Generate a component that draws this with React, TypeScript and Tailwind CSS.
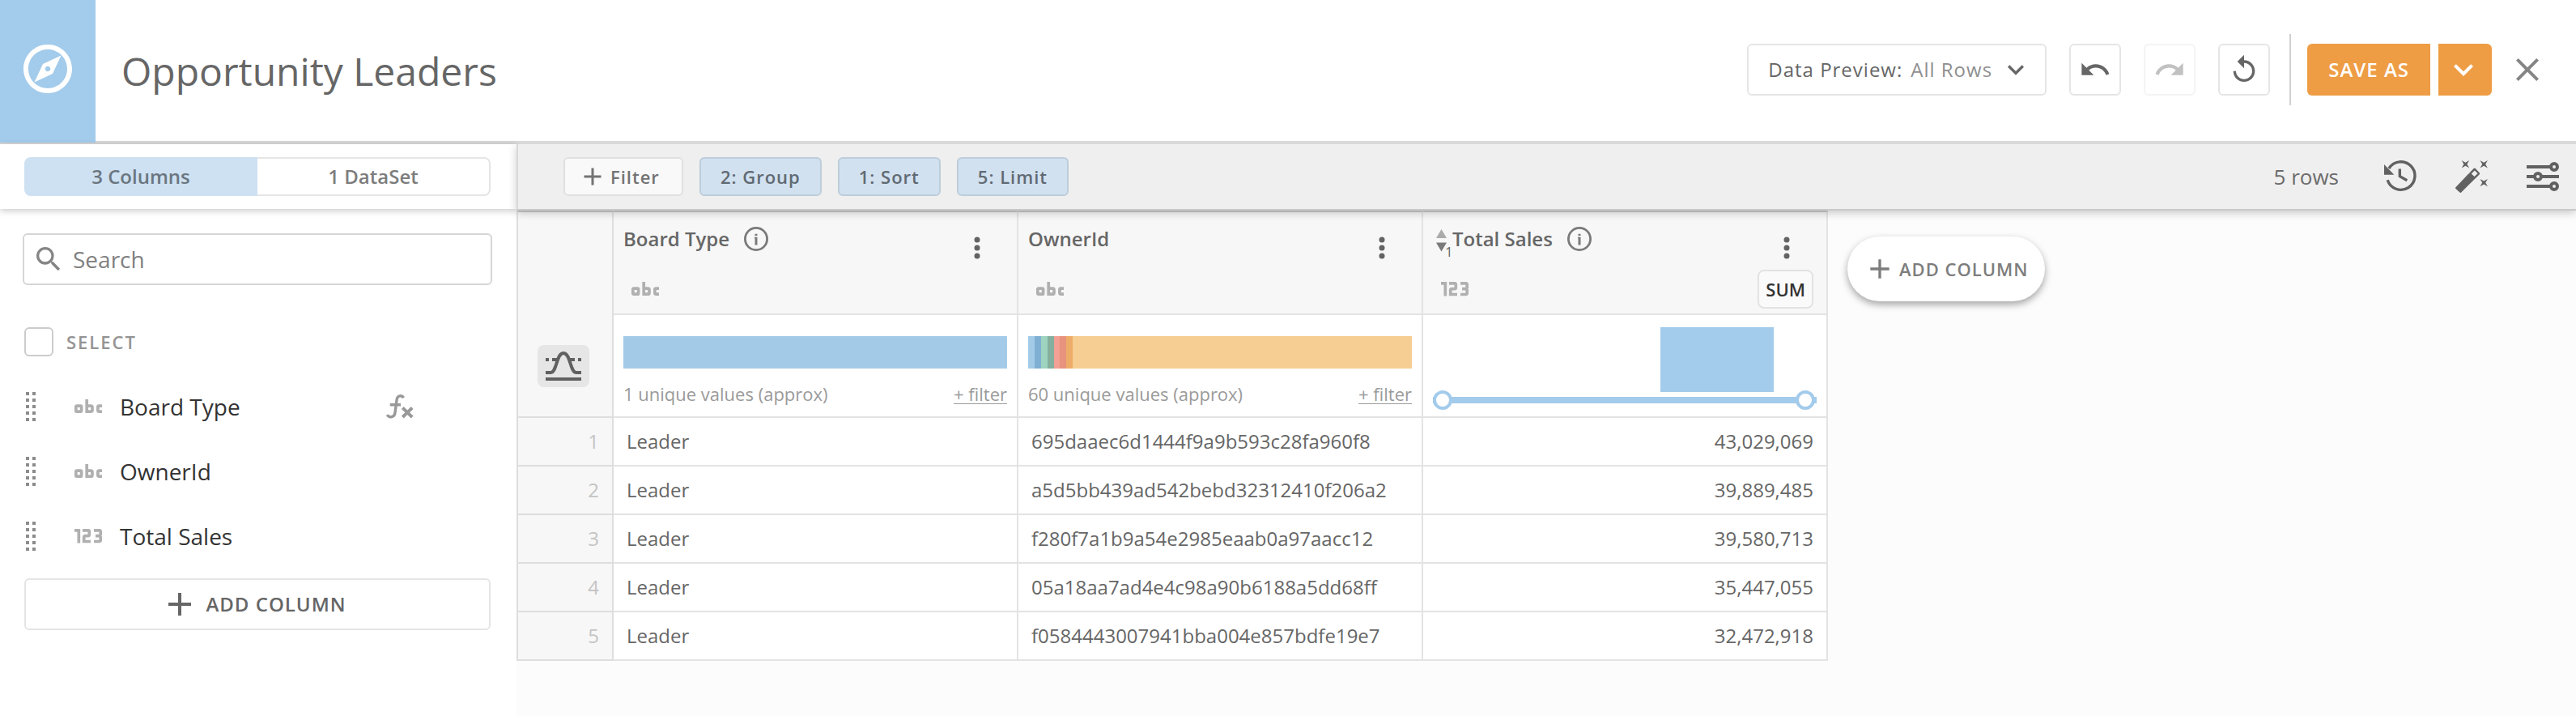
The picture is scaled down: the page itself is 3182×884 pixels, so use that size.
import React, { useState } from "react";
import {
  MdAdd,
  MdClose,
  MdKeyboardArrowDown,
  MdOutlineExplore,
  MdRedo,
  MdReplay,
  MdSearch,
  MdUndo,
} from "react-icons/md";

type ColumnKind = "text" | "number";

function TextTypeIcon() {
  return (
    <svg width="34" height="18" viewBox="0 0 34 18" fill="none" stroke="currentColor" strokeWidth="3.7" role="img" aria-label="Text column">
      <rect x="1.8" y="8.2" width="6.8" height="7" rx="1" />
      <path d="M15.2 0V15.2H20.2Q22 15.2 22 13.4V10Q22 8.2 20.2 8.2H15.2" />
      <path d="M34 8.2H30.4Q28.9 8.2 28.9 9.8V13.6Q28.9 15.2 30.4 15.2H34" />
    </svg>
  );
}

function NumberTypeIcon() {
  return (
    <svg width="34" height="18" viewBox="0 0 34 18" fill="none" stroke="currentColor" strokeWidth="3.7" role="img" aria-label="Number column">
      <path d="M0 1.8H5.3V17.5" />
      <path d="M10 1.8H16.6Q18.3 1.8 18.3 3.4V6.9Q18.3 8.6 16.6 8.6H13.4Q11.7 8.6 11.7 10.3V15.5H20" />
      <path d="M24 1.8H30.6Q32.2 1.8 32.2 3.4V7L30.8 8.6L32.2 10.2V13.8Q32.2 15.5 30.6 15.5H24M26 8.6H31" />
    </svg>
  );
}

function TypeIcon({ kind }: { kind: ColumnKind }) {
  return kind === "text" ? <TextTypeIcon /> : <NumberTypeIcon />;
}

function FormulaIcon() {
  return (
    <svg width="34" height="30" viewBox="0 0 34 30" fill="none" stroke="currentColor" strokeWidth="3.4" role="img" aria-label="Formula">
      <path d="M21.5 4.2C19.5 .8 14 .8 13.2 6L11 22.5C10.3 28.6 4 29.2 1.2 25.2M4.7 12.7H18" />
      <path d="M20.3 16.5L32.2 28M32.2 16.5L20.3 28" strokeWidth="4" />
    </svg>
  );
}

function DragHandle() {
  return (
    <svg width="12" height="36" viewBox="0 0 12 36" fill="currentColor" aria-hidden="true">
      {[0, 8, 16, 24, 32].map((y) => (
        <path key={y} d={`M0 ${y}h4v4h-4zM8 ${y}h4v4h-4z`} />
      ))}
    </svg>
  );
}

function InfoIcon() {
  return (
    <svg width="30" height="30" viewBox="0 0 30 30" fill="none" stroke="currentColor" aria-hidden="true">
      <circle cx="15" cy="15" r="13.6" strokeWidth="2.8" />
      <path d="M15 8.8V11M15 12.8V22.6" strokeWidth="3" />
      <path d="M13 13.5h2" strokeWidth="1.4" />
    </svg>
  );
}

function DotsIcon() {
  return (
    <svg width="8" height="28" viewBox="0 0 8 28" fill="currentColor" aria-hidden="true">
      <circle cx="4" cy="4" r="3.5" />
      <circle cx="4" cy="14" r="3.5" />
      <circle cx="4" cy="24" r="3.5" />
    </svg>
  );
}

function HistoryIcon() {
  return (
    <svg width="40" height="40" viewBox="0 0 40 40" fill="none" stroke="currentColor" strokeWidth="3.4" aria-hidden="true">
      <path d="M0 5V17.7H12.3Z" fill="currentColor" stroke="none" />
      <path d="M5.9 10A17.3 17.3 0 1 1 4.2 24.3M19.3 10.5V19.6L28.3 24.8" />
    </svg>
  );
}

function WandIcon() {
  const star = "-4.7 -4.7l4.7 2.7l4.7 -2.7l-2.7 4.7l2.7 4.7l-4.7 -2.7l-4.7 2.7l2.7 -4.7z";
  return (
    <svg width="40" height="40" viewBox="0 0 40 40" fill="currentColor" aria-hidden="true">
      <path
        fillRule="evenodd"
        d="M22.6 10Q23.7 9 24.8 10L29.7 15.2Q30.6 16.3 29.6 17.4L7 39.7Q6.2 40.2 5.4 39.5L.4 35Q-.4 34.1 .4 33.2ZM23.8 12.6L19.8 16.4L23.4 20L27.6 16.2Z"
      />
      <path d={`M12.4 4.7m${star}M35.2 4.7m${star}M35.2 27.6m${star}`} />
    </svg>
  );
}

function TuneIcon() {
  return (
    <svg width="40" height="36" viewBox="0 0 40 36" fill="none" stroke="currentColor" strokeWidth="4" aria-hidden="true">
      <path d="M0 6H30M0 18H10M18 18H40M0 30H30" />
      <circle cx="34" cy="6" r="4" />
      <circle cx="14" cy="18" r="4" />
      <circle cx="34" cy="30" r="4" />
    </svg>
  );
}

function DistributionIcon() {
  return (
    <svg width="44" height="36" viewBox="0 0 44 36" fill="none" stroke="currentColor" strokeWidth="4" aria-hidden="true">
      <path d="M0 26H6C14 26 13 2 22 2S30 26 38 26H44M0 34H44" />
      <path d="M0 10H4M8 10H15M29 10H36M40 10H44" />
    </svg>
  );
}

function SortArrows() {
  return (
    <span className="relative block h-8 w-6 shrink-0">
      <svg className="absolute top-1 left-1" width="13" height="28" viewBox="0 0 13 28" role="img" aria-label="Sorted descending">
        <path d="M6.5 0L13 11H0Z" fill="#ababab" />
        <path d="M6.5 27.5L13 16.5H0Z" fill="#7a7a7a" />
      </svg>
      <span className="absolute top-[22px] left-[15px] text-[17px] leading-5 font-normal">1</span>
    </span>
  );
}

interface HeaderCellProps {
  name: string;
  kind: ColumnKind;
  info?: boolean;
  sorted?: boolean;
  aggregate?: string;
}

function HeaderCell({ name, kind, info, sorted, aggregate }: HeaderCellProps) {
  return (
    <th scope="col" className="border-t-2 border-r-2 border-b-2 border-[#e3e3e3] border-t-[#c9c9c9] bg-[#f7f7f7] p-0 text-left align-top font-semibold">
      <div className="mt-[17px] flex h-[54px] items-start justify-between pl-3">
        <div className="flex h-8 items-center">
          {sorted && <SortArrows />}
          <span>{name}</span>
          {info && (
            <button type="button" aria-label={`About ${name}`} className="ml-[18px] text-[#7a7a7a]">
              <InfoIcon />
            </button>
          )}
        </div>
        <button type="button" aria-label={`${name} options`} className="mr-[33px] flex h-[54px] w-8 items-center justify-center text-[#636363]">
          <DotsIcon />
        </button>
      </div>
      <div className="mb-1.5 flex h-12 items-center justify-between pr-4 pl-[22px] text-[#b0b0b0]">
        <TypeIcon kind={kind} />
        {aggregate && (
          <button type="button" className="h-12 rounded-lg border-2 border-[#e3e3e3] bg-[#fafafa] px-2 text-[22px] font-semibold text-[#333]">
            {aggregate}
          </button>
        )}
      </div>
    </th>
  );
}

function ValuesCell({ label, segments }: { label: string; segments: React.ReactNode }) {
  return (
    <td className="border-r-2 border-b-2 border-[#e3e3e3] bg-white p-0 align-top">
      <div className="px-3 pt-[26px] pb-3">
        <div className="flex h-10">{segments}</div>
        <div className="mt-[15px] flex items-center justify-between text-[22px] leading-8 text-[#9a9a9a]">
          <span>{label}</span>
          <a href="#filter" className="border-b border-[#9a9a9a] leading-6">
            + filter
          </a>
        </div>
      </div>
    </td>
  );
}

const thumb =
  "pointer-events-none absolute top-0 left-0 h-6 w-[calc(100%-2px)] appearance-none bg-transparent [&::-webkit-slider-thumb]:pointer-events-auto [&::-webkit-slider-thumb]:size-6 [&::-webkit-slider-thumb]:appearance-none [&::-webkit-slider-thumb]:rounded-full [&::-webkit-slider-thumb]:border-4 [&::-webkit-slider-thumb]:border-[#a3cbeb] [&::-webkit-slider-thumb]:bg-white";

function HistogramCell() {
  const [range, setRange] = useState([0, 100]);
  return (
    <td className="border-r-2 border-b-2 border-[#e3e3e3] bg-white p-0 align-top">
      <div className="px-3 pt-[15px] pb-2">
        <div className="flex h-20 justify-end pr-[53px]">
          <div className="w-[140px] bg-[#a3cbeb]" />
        </div>
        <div className="relative -mt-0.5 flex h-6 items-center">
          <div className="h-2 w-full bg-[#a3cbeb]" />
          <input type="range" aria-label="Minimum" value={range[0]} onChange={(e) => setRange([+e.target.value, range[1]])} className={thumb} />
          <input type="range" aria-label="Maximum" value={range[1]} onChange={(e) => setRange([range[0], +e.target.value])} className={thumb} />
        </div>
      </div>
    </td>
  );
}

const fields: { name: string; kind: ColumnKind; formula?: boolean }[] = [
  { name: "Board Type", kind: "text", formula: true },
  { name: "OwnerId", kind: "text" },
  { name: "Total Sales", kind: "number" },
];

const rows = [
  ["Leader", "695daaec6d1444f9a9b593c28fa960f8", "43,029,069"],
  ["Leader", "a5d5bb439ad542bebd32312410f206a2", "39,889,485"],
  ["Leader", "f280f7a1b9a54e2985eaab0a97aacc12", "39,580,713"],
  ["Leader", "05a18aa7ad4e4c98a90b6188a5dd68ff", "35,447,055"],
  ["Leader", "f0584443007941bba004e857bdfe19e7", "32,472,918"],
];

const steps = ["2: Group", "1: Sort", "5: Limit"];

const squareButton = "flex size-16 items-center justify-center rounded-md border-2 border-[#e5e5e5] text-[#666]";

function Header() {
  return (
    <header className="flex h-[178px] border-b-4 border-[#d9d9d9] bg-white">
      <div className="-mb-0.5 flex w-[118px] shrink-0 items-center justify-center bg-[#a3cbeb] pb-1.5 text-white">
        <MdOutlineExplore size={72} />
      </div>
      <div className="flex flex-1 items-center justify-between pr-[46px] pb-0.5 pl-8">
        <h1 className="pt-1 text-[48px] leading-none text-[#666]">Opportunity Leaders</h1>
        <div className="flex items-center">
          <div className="relative flex h-16 items-center rounded-md border-2 border-[#e5e5e5] pr-5 pl-6 text-[24px] tracking-[1px] text-[#666]">
            <label htmlFor="preview">Data Preview:</label>
            <select id="preview" className="ml-2.5 w-[146px] appearance-none bg-transparent text-[#8f8f8f]">
              <option>All Rows</option>
            </select>
            <MdKeyboardArrowDown size={40} className="pointer-events-none absolute right-4" />
          </div>
          <button type="button" aria-label="Undo" className={`ml-7 ${squareButton}`}>
            <MdUndo size={40} className="shrink-0" />
          </button>
          <button type="button" aria-label="Redo" disabled className={`ml-7 opacity-40 ${squareButton}`}>
            <MdRedo size={40} className="shrink-0" />
          </button>
          <button type="button" aria-label="Reset" className={`ml-7 ${squareButton}`}>
            <MdReplay size={40} className="shrink-0" />
          </button>
          <div className="mr-5 ml-6 h-[88px] w-0.5 bg-[#d0d0d0]" />
          <button type="button" className="h-16 rounded-l-md bg-[#ee9d45] px-[26px] text-[24px] font-semibold tracking-[1px] text-white">
            SAVE AS
          </button>
          <button type="button" aria-label="More save options" className="ml-2.5 flex h-16 w-[66px] items-center justify-center rounded-r-md bg-[#ee9d45] pr-1 text-white">
            <MdKeyboardArrowDown size={48} />
          </button>
          <button type="button" aria-label="Close" className="-mr-2.5 ml-5 text-[#858585]">
            <MdClose size={48} />
          </button>
        </div>
      </div>
    </header>
  );
}

function Sidebar() {
  return (
    <aside className="w-[638px] shrink-0 bg-white">
      <div className="flex h-20 items-center bg-white pr-8 pl-[30px] text-[24px] font-semibold shadow-[0_2px_8px_rgba(0,0,0,0.22)]">
        <button type="button" className="h-12 w-1/2 rounded-l-lg bg-[#cee1f2] text-[#6a7680]">
          3 Columns
        </button>
        <button type="button" className="h-12 w-1/2 rounded-r-lg border-2 border-l-0 border-[#e5e5e5] text-[#7d7d7d]">
          1 DataSet
        </button>
      </div>
      <div className="pt-[30px] pr-8 pl-[30px]">
        <div className="-mx-0.5 flex h-16 items-center rounded-md border-2 border-[#d6d6d6] pl-2.5 text-[#858585]">
          <MdSearch size={40} />
          <input type="search" aria-label="Search" placeholder="Search" className="ml-2.5 min-w-0 flex-1 bg-transparent text-[28px] outline-none placeholder:text-[#808080]" />
        </div>
        <label className="mt-[52px] flex h-9 items-center gap-4 text-[22px] font-semibold tracking-[2px] text-[#949494]">
          <input type="checkbox" className="size-9 appearance-none rounded-md border-2 border-[#ccc] bg-white checked:bg-[#a3cbeb]" />
          SELECT
        </label>
        <ul className="mt-[22px]">
          {fields.map((field) => (
            <li key={field.name} className="flex h-20 items-center pr-[95px] pl-0.5 text-[28px] text-[#333]">
              <span className="text-[#8c8c8c]">
                <DragHandle />
              </span>
              <span className="ml-12 text-[#b0b0b0]">
                <TypeIcon kind={field.kind} />
              </span>
              <span className="ml-[22px] flex-1">{field.name}</span>
              {field.formula && (
                <span className="text-[#999]">
                  <FormulaIcon />
                </span>
              )}
            </li>
          ))}
        </ul>
        <button type="button" className="mt-3 flex h-16 w-full items-center justify-center gap-2 rounded-md border-2 border-[#e5e5e5] pr-2.5 text-[24px] font-semibold tracking-[1px] text-[#666]">
          <MdAdd size={48} />
          ADD COLUMN
        </button>
      </div>
    </aside>
  );
}

function Toolbar() {
  return (
    <div className="relative z-10 flex h-[82px] items-center justify-between border-b-2 border-l-2 border-[#c9c9c9] border-l-[#d9d9d9] bg-[#efefef] pr-[21px] pl-14 shadow-[0_3px_10px_rgba(0,0,0,0.2)] [clip-path:inset(0_0_-16px_-16px)]">
      <div className="flex gap-5 text-[22px] font-semibold tracking-[1px]">
        <button type="button" className="flex h-12 items-center gap-1 rounded-md border-2 border-[#e0e0e0] bg-[#f9f9f9] pr-[27px] pl-4 text-[#737373]">
          <MdAdd size={36} />
          Filter
        </button>
        {steps.map((step) => (
          <button key={step} type="button" className="h-12 rounded-md border-2 border-[#bccddc] bg-[#d2e1f0] px-6 text-[#606a73]">
            {step}
          </button>
        ))}
      </div>
      <div className="flex items-center text-[#616161]">
        <span className="mr-14 text-[26px] text-[#6b6b6b]">5 rows</span>
        <button type="button" aria-label="History" className="mr-12">
          <HistoryIcon />
        </button>
        <button type="button" aria-label="Suggestions" className="mr-12">
          <WandIcon />
        </button>
        <button type="button" aria-label="Settings">
          <TuneIcon />
        </button>
      </div>
    </div>
  );
}

function DataTable() {
  return (
    <table className="w-[1620px] shrink-0 table-fixed border-separate border-spacing-0 text-[24px] text-[#666]">
      <colgroup>
        <col className="w-[120px]" />
        <col className="w-[500px]" />
        <col className="w-[500px]" />
        <col className="w-[500px]" />
      </colgroup>
      <thead>
        <tr>
          <th rowSpan={2} className="border-2 border-[#dedede] border-t-[#c9c9c9] bg-[#f7f7f7] p-0 align-bottom">
            <button type="button" aria-label="Toggle distributions" className="mb-9 ml-6 flex h-[52px] w-16 items-center justify-center rounded-lg bg-[#e6e6e6] text-[#616161]">
              <DistributionIcon />
            </button>
          </th>
          <HeaderCell name="Board Type" kind="text" info />
          <HeaderCell name="OwnerId" kind="text" />
          <HeaderCell name="Total Sales" kind="number" info sorted aggregate="SUM" />
        </tr>
        <tr>
          <ValuesCell label="1 unique values (approx)" segments={<div className="flex-1 bg-[#a3cbe8]" />} />
          <ValuesCell
            label="60 unique values (approx)"
            segments={
              <>
                <div className="w-2 bg-[#a3cbe8]" />
                <div className="w-2 bg-[#7fb0d3]" />
                <div className="w-2 bg-[#9dd3bf]" />
                <div className="w-2 bg-[#84af9f]" />
                <div className="w-[7px] bg-[#f2a095]" />
                <div className="w-2 bg-[#e8937d]" />
                <div className="w-2 bg-[#edad68]" />
                <div className="flex-1 bg-[#f6cd92]" />
              </>
            }
          />
          <HistogramCell />
        </tr>
      </thead>
      <tbody>
        {rows.map(([board, owner, sales], i) => (
          <tr key={owner} className="h-[60px]">
            <th scope="row" className="border-x-2 border-b-2 border-[#dedede] bg-[#f7f7f7] py-0 pr-4 pl-0 text-right font-normal text-[#c4c4c4]">
              {i + 1}
            </th>
            <td className="border-r-2 border-b-2 border-[#e3e3e3] bg-white px-4 py-0">{board}</td>
            <td className="border-r-2 border-b-2 border-[#e3e3e3] bg-white px-4 py-0">{owner}</td>
            <td className="border-r-2 border-b-2 border-[#e3e3e3] bg-white px-4 py-0 text-right">{sales}</td>
          </tr>
        ))}
      </tbody>
    </table>
  );
}

export default function App() {
  return (
    <div className="flex min-h-screen flex-col bg-white font-['Open_Sans',sans-serif]">
      <Header />
      <div className="flex flex-1">
        <Sidebar />
        <main className="flex min-w-0 flex-1 flex-col bg-[#fcfcfc]">
          <Toolbar />
          <div className="flex items-start">
            <DataTable />
            <button type="button" className="mt-8 ml-6 flex h-20 items-center gap-1 rounded-full bg-white px-5 text-[22px] font-semibold tracking-[1px] whitespace-nowrap text-[#7d7d7d] shadow-[0_4px_10px_rgba(0,0,0,0.35)]">
              <MdAdd size={40} />
              ADD COLUMN
            </button>
          </div>
        </main>
      </div>
    </div>
  );
}
